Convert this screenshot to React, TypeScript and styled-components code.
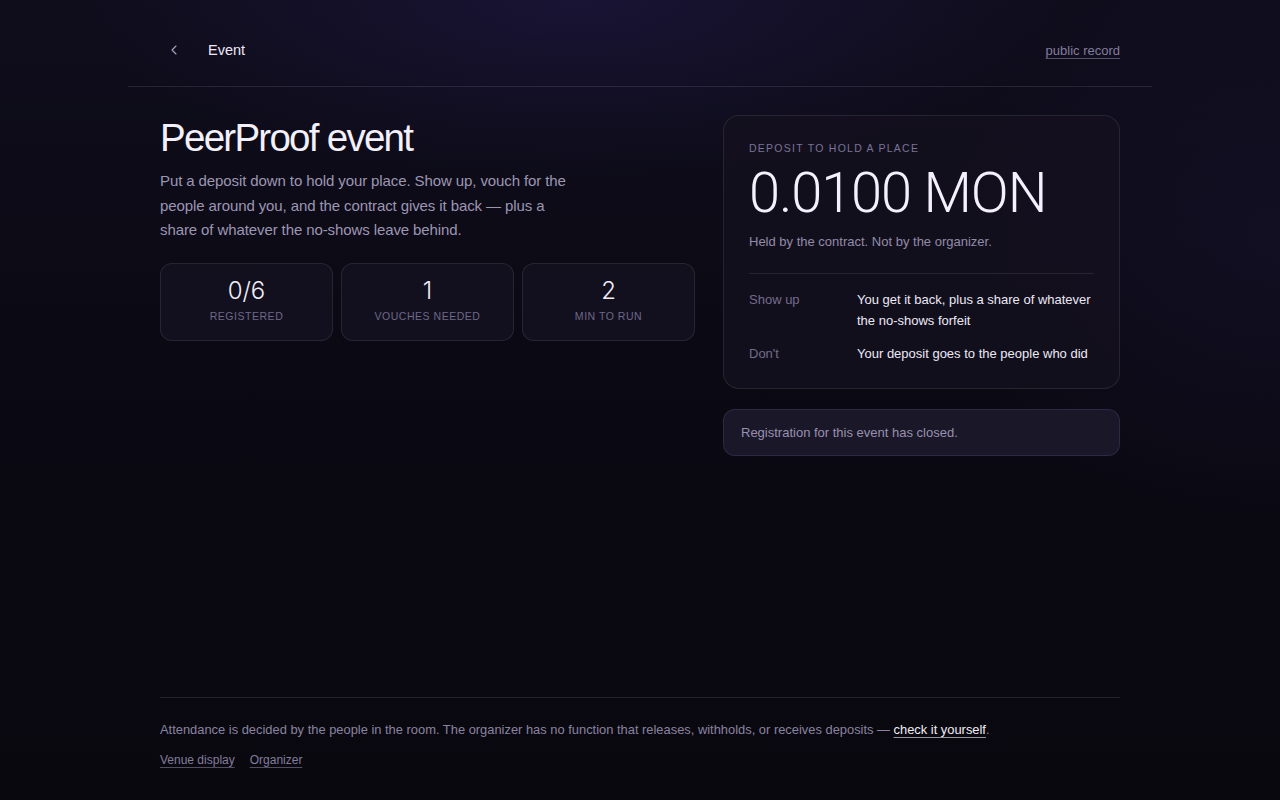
import { FunctionComponent } from 'react';
import styled, { createGlobalStyle } from 'styled-components';

const GlobalStyle = createGlobalStyle`
	html, body {
		margin: 0;
		padding: 0;
		background: #09080f;
	}
	body {
		font-family: 'Liberation Sans', Arial, sans-serif;
		color: #ece9f5;
		-webkit-font-smoothing: antialiased;
	}
	* {
		box-sizing: border-box;
	}
`;

const Page = styled.div`
	min-height: 800px;
	display: flex;
	flex-direction: column;
	background:
		radial-gradient(ellipse 700px 260px at 45% 0%, rgba(40, 30, 90, 0.38), transparent 70%),
		radial-gradient(ellipse 500px 400px at 100% 30%, rgba(30, 22, 60, 0.35), transparent 70%),
		linear-gradient(180deg, #0f0d1c 0%, #0b0a14 40%, #09080f 100%);
`;

const Header = styled.header`
	width: 1024px;
	margin: 0 auto;
	height: 87px;
	padding: 14px 32px 0 32px;
	display: flex;
	align-items: center;
	justify-content: space-between;
	border-bottom: 1px solid rgba(255, 255, 255, 0.1);
`;

const HeaderLeft = styled.div`
	display: flex;
	align-items: center;
	gap: 20px;
`;

const BackButton = styled.button`
	width: 28px;
	height: 28px;
	display: flex;
	align-items: center;
	justify-content: center;
	background: transparent;
	border: none;
	padding: 0;
	color: #a9a3bf;
	cursor: pointer;
`;

const HeaderTitle = styled.span`
	font-size: 14.5px;
	color: #ece9f5;
`;

const MutedLink = styled.a<{ $size?: number }>`
	font-size: ${(p) => p.$size ?? 13}px;
	line-height: 15px;
	color: #847c9c;
	text-decoration: underline;
	text-decoration-color: rgba(132, 124, 156, 0.6);
	text-underline-offset: 3px;
	cursor: pointer;
`;

const Main = styled.main`
	width: 960px;
	margin: 0 auto;
	padding-top: 28px;
	display: grid;
	grid-template-columns: 535px 397px;
	column-gap: 28px;
	align-items: start;
	flex: 1;
`;

const LeftColumn = styled.section`
	display: flex;
	flex-direction: column;
`;

const Title = styled.h1`
	margin: 2px 0 0 0;
	font-size: 38.5px;
	font-weight: 400;
	line-height: 1.1;
	letter-spacing: -0.045em;
	color: #f3f0fa;
`;

const Lead = styled.p`
	margin: 10px 0 0 0;
	max-width: 420px;
	font-size: 15px;
	line-height: 24.5px;
	letter-spacing: -0.1px;
	color: #9d96b3;
`;

const StatGrid = styled.div`
	margin-top: 20px;
	display: grid;
	grid-template-columns: repeat(3, 1fr);
	gap: 8px;
`;

const StatCard = styled.div`
	height: 78px;
	padding-top: 14px;
	border-radius: 12px;
	border: 1px solid rgba(255, 255, 255, 0.09);
	background: rgba(22, 19, 34, 0.75);
	display: flex;
	flex-direction: column;
	align-items: center;
	gap: 5px;
`;

const StatValue = styled.div`
	font-family: Inter, 'Liberation Sans', sans-serif;
	font-size: 24px;
	font-weight: 300;
	line-height: 26px;
	color: #f1eef8;
`;

const StatLabel = styled.div`
	font-size: 10.5px;
	line-height: 14px;
	letter-spacing: 0.05em;
	text-transform: uppercase;
	color: #6f6888;
`;

const RightColumn = styled.aside`
	display: flex;
	flex-direction: column;
	gap: 20px;
`;

const DepositCard = styled.div`
	border-radius: 16px;
	border: 1px solid rgba(255, 255, 255, 0.09);
	background: rgba(20, 17, 31, 0.85);
	padding: 25px 25px 24px 25px;
`;

const Eyebrow = styled.div`
	font-size: 10.5px;
	line-height: 14px;
	letter-spacing: 0.12em;
	text-transform: uppercase;
	color: #7a7396;
`;

const Amount = styled.div`
	margin-top: 6px;
	font-family: Roboto, 'Liberation Sans', sans-serif;
	font-weight: 300;
	font-size: 56px;
	line-height: 64px;
	letter-spacing: -0.02em;
	color: #f4f0ff;
`;

const Held = styled.p`
	margin: 8px 0 0 0;
	font-size: 13px;
	line-height: 18px;
	color: #928ba8;
`;

const Divider = styled.hr`
	margin: 22px 0 15px 0;
	border: none;
	border-top: 1px solid rgba(255, 255, 255, 0.09);
`;

const Terms = styled.dl`
	margin: 0;
	display: grid;
	grid-template-columns: 108px 1fr;
	row-gap: 12px;
	font-size: 13px;
	line-height: 21px;
`;

const TermLabel = styled.dt`
	color: #736c8c;
`;

const TermText = styled.dd`
	margin: 0;
	color: #ece9f5;
`;

const ClosedNotice = styled.div`
	height: 47px;
	display: flex;
	align-items: center;
	padding: 0 17px;
	border-radius: 12px;
	border: 1px solid rgba(150, 130, 220, 0.16);
	background: #1a1729;
	font-size: 13px;
	color: #9891ae;
`;

const Footer = styled.footer`
	width: 960px;
	margin: 0 auto;
	padding: 22px 0 32px 0;
	border-top: 1px solid rgba(255, 255, 255, 0.1);
`;

const FooterText = styled.p`
	margin: 0;
	font-size: 12.9px;
	line-height: 20px;
	color: #8a83a0;
`;

const StrongLink = styled.a`
	color: #f1eef8;
	text-decoration: underline;
	text-decoration-color: rgba(241, 238, 248, 0.6);
	text-underline-offset: 3px;
	cursor: pointer;
`;

const FooterLinks = styled.div`
	margin-top: 13px;
	display: flex;
	gap: 15px;
`;

const stats = [
	{ value: '0/6', label: 'Registered' },
	{ value: '1', label: 'Vouches needed' },
	{ value: '2', label: 'Min to run' },
];

const App: FunctionComponent = () => {
	return (
		<Page>
			<GlobalStyle />
			<Header>
				<HeaderLeft>
					<BackButton aria-label="Back">
						<svg width="16" height="16" viewBox="0 0 24 24" fill="none" stroke="currentColor" strokeWidth="1.6" strokeLinecap="round" strokeLinejoin="round">
							<path d="M15 18l-6-6 6-6" />
						</svg>
					</BackButton>
					<HeaderTitle>Event</HeaderTitle>
				</HeaderLeft>
				<MutedLink $size={13}>public record</MutedLink>
			</Header>

			<Main>
				<LeftColumn>
					<Title>PeerProof event</Title>
					<Lead>
						Put a deposit down to hold your place. Show up, vouch for the people around you, and the contract gives it
						back — plus a share of whatever the no-shows leave behind.
					</Lead>
					<StatGrid>
						{stats.map((s) => (
							<StatCard key={s.label}>
								<StatValue>{s.value}</StatValue>
								<StatLabel>{s.label}</StatLabel>
							</StatCard>
						))}
					</StatGrid>
				</LeftColumn>

				<RightColumn>
					<DepositCard>
						<Eyebrow>Deposit to hold a place</Eyebrow>
						<Amount>0.0100 MON</Amount>
						<Held>Held by the contract. Not by the organizer.</Held>
						<Divider />
						<Terms>
							<TermLabel>Show up</TermLabel>
							<TermText>You get it back, plus a share of whatever the no-shows forfeit</TermText>
							<TermLabel>Don't</TermLabel>
							<TermText>Your deposit goes to the people who did</TermText>
						</Terms>
					</DepositCard>
					<ClosedNotice>Registration for this event has closed.</ClosedNotice>
				</RightColumn>
			</Main>

			<Footer>
				<FooterText>
					Attendance is decided by the people in the room. The organizer has no function that releases, withholds, or
					receives deposits — <StrongLink>check it yourself</StrongLink>.
				</FooterText>
				<FooterLinks>
					<MutedLink $size={12}>Venue display</MutedLink>
					<MutedLink $size={12}>Organizer</MutedLink>
				</FooterLinks>
			</Footer>
		</Page>
	);
};

export default App;
